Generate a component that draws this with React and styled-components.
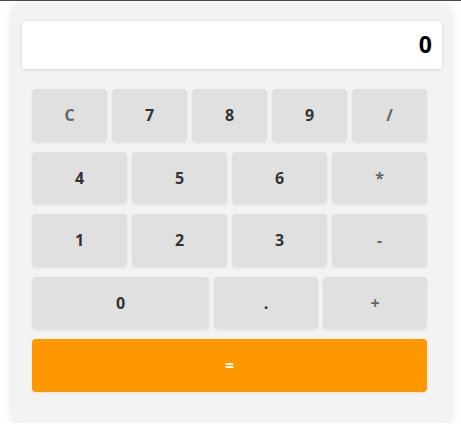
import React, { useState } from 'react';
import styled, { createGlobalStyle } from 'styled-components';

const GlobalStyle = createGlobalStyle`
  html { border-top: 1px solid #4a4a4a; }
  body {
    margin: 0;
    background: #fff;
    font-family: "Open Sans", "Liberation Sans", sans-serif;
  }
`;

const Card = styled.div`
  margin: 2px 10px 0 12px;
  width: 439px;
  box-sizing: border-box;
  padding: 18px 9px 31px 10px;
  background: #f3f3f3;
  border-radius: 10px;
  box-shadow: 0 2px 10px rgba(0, 0, 0, 0.12);
`;

const Display = styled.div`
  height: 48px;
  box-sizing: border-box;
  background: #fff;
  border-radius: 4px;
  box-shadow: 0 1px 4px rgba(0, 0, 0, 0.12);
  display: flex;
  align-items: center;
  justify-content: flex-end;
  padding: 0 10px 2px;
  font-size: 23px;
  font-weight: 700;
  color: #000;
`;

const Keypad = styled.div`
  display: flex;
  flex-direction: column;
  gap: 10px;
  padding: 20px 15px 0 10px;
`;

const Row = styled.div`
  display: grid;
  grid-template-columns: ${(p) => p.$cols};
  gap: 5px;
`;

const Key = styled.button`
  height: 52.5px;
  border: none;
  border-radius: 4px;
  background: ${(p) => (p.$equal ? '#ff9800' : '#e0e0e0')};
  box-shadow: 0 1px 3px rgba(0, 0, 0, 0.08);
  font-family: inherit;
  font-size: 16px;
  font-weight: 700;
  color: ${(p) => (p.$equal ? '#fff' : p.$op ? '#666' : '#333')};
  cursor: pointer;
  padding: 0;
`;

const rows = [
  { cols: 'repeat(5, 1fr)', keys: [['C', true], ['7'], ['8'], ['9'], ['/', true]] },
  { cols: 'repeat(4, 1fr)', keys: [['4'], ['5'], ['6'], ['*', true]] },
  { cols: 'repeat(4, 1fr)', keys: [['1'], ['2'], ['3'], ['-', true]] },
  { cols: '177px 104px 104px', keys: [['0'], ['.'], ['+', true]] },
];

export default function App() {
  const [value] = useState('0');
  return (
    <>
      <GlobalStyle />
      <Card>
        <Display>{value}</Display>
        <Keypad>
          {rows.map((row, i) => (
            <Row key={i} $cols={row.cols}>
              {row.keys.map(([label, op]) => (
                <Key key={label} $op={op}>{label}</Key>
              ))}
            </Row>
          ))}
          <Key $equal>=</Key>
        </Keypad>
      </Card>
    </>
  );
}
